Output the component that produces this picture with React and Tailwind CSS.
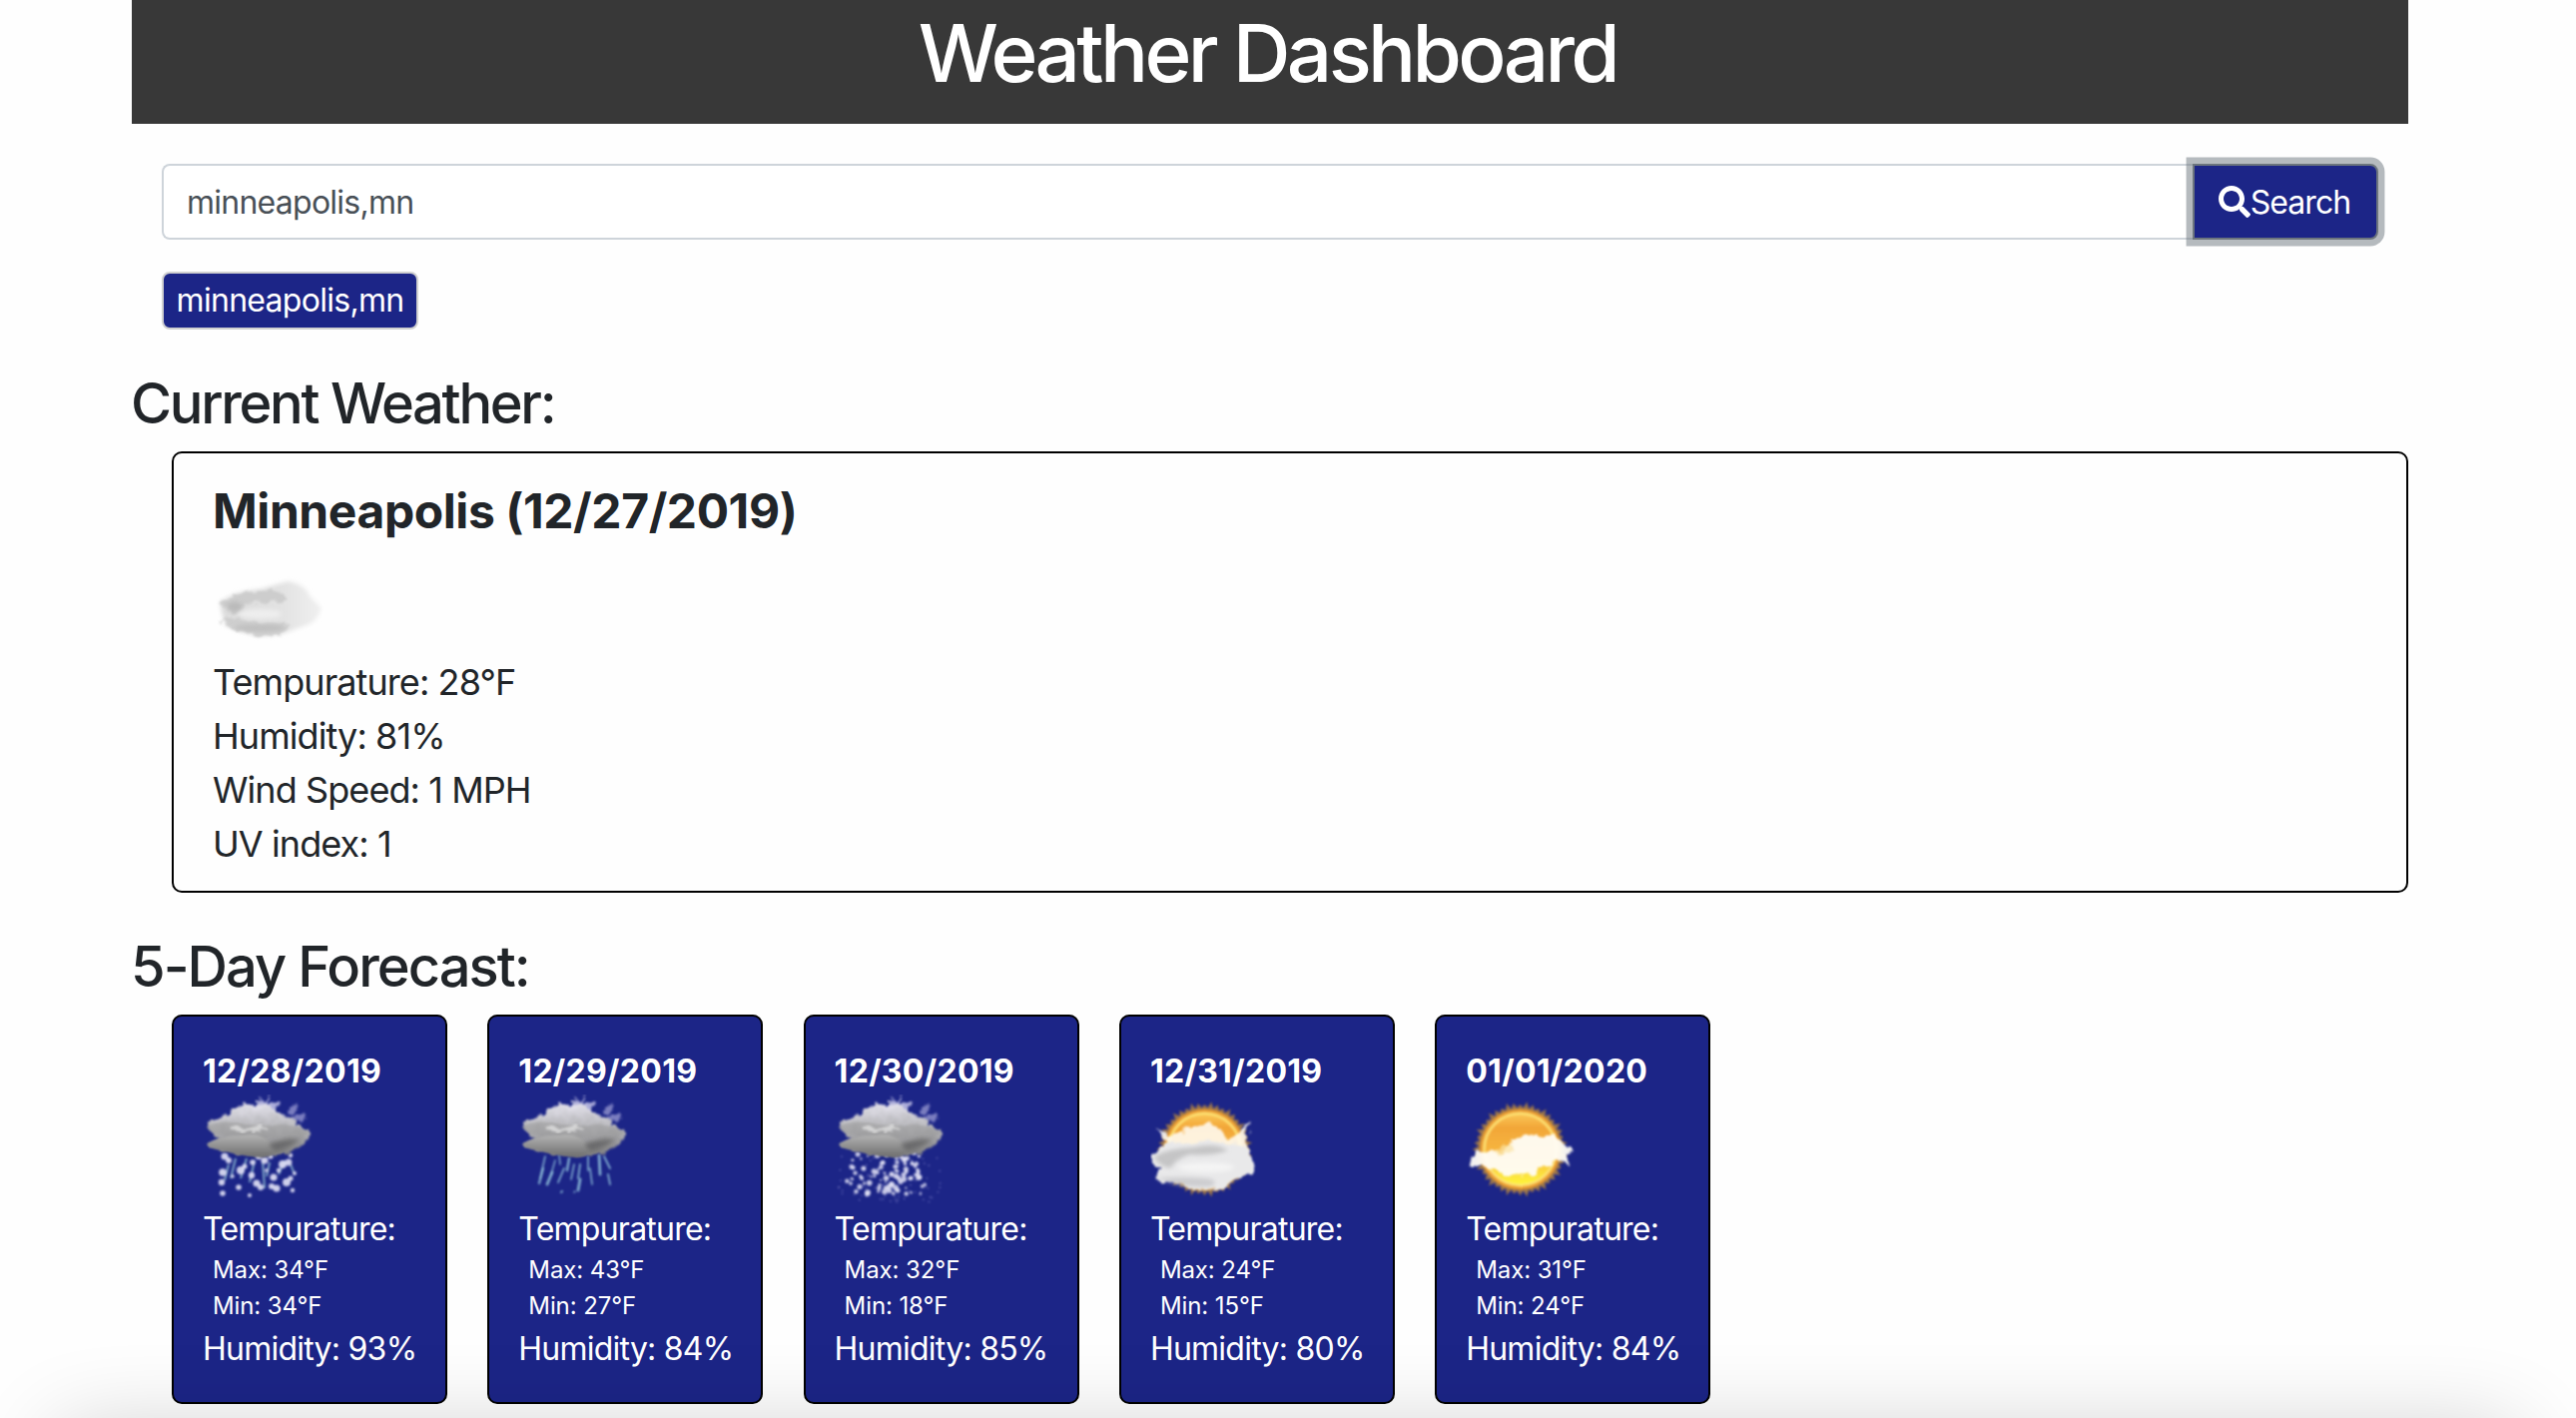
import React from "react";
import { FaSearch } from "react-icons/fa";

const forecast = [
  { date: "12/28/2019", icon: "sleet", max: 34, min: 34, humidity: 93 },
  { date: "12/29/2019", icon: "rain", max: 43, min: 27, humidity: 84 },
  { date: "12/30/2019", icon: "snow", max: 32, min: 18, humidity: 85 },
  { date: "12/31/2019", icon: "broken", max: 24, min: 15, humidity: 80 },
  { date: "01/01/2020", icon: "few", max: 31, min: 24, humidity: 84 },
];

function Defs() {
  return (
    <svg className="absolute h-0 w-0" aria-hidden="true">
      <defs>
        <filter id="wisp" x="-20%" y="-20%" width="140%" height="140%">
          <feTurbulence type="fractalNoise" baseFrequency="0.11" numOctaves="3" seed="4" result="n" />
          <feDisplacementMap in="SourceGraphic" in2="n" scale="11" xChannelSelector="R" yChannelSelector="G" />
          <feGaussianBlur stdDeviation="1.1" />
        </filter>
        <filter id="soft" x="-20%" y="-20%" width="140%" height="140%">
          <feGaussianBlur stdDeviation="0.9" />
        </filter>
        <filter id="haze" x="-30%" y="-30%" width="160%" height="160%">
          <feGaussianBlur stdDeviation="2.2" />
        </filter>
        <linearGradient id="storm" x1="0" y1="0" x2="0" y2="1">
          <stop offset="0" stopColor="#e6e4ee" />
          <stop offset="0.4" stopColor="#b9b9bd" />
          <stop offset="1" stopColor="#7c7c7e" />
        </linearGradient>
        <linearGradient id="stormLow" x1="0" y1="0" x2="0" y2="1">
          <stop offset="0" stopColor="#b4b4b4" />
          <stop offset="1" stopColor="#6e6e6e" />
        </linearGradient>
        <linearGradient id="sunFace" x1="0" y1="0" x2="0" y2="1">
          <stop offset="0" stopColor="#fbc757" />
          <stop offset="0.2" stopColor="#f2a638" />
          <stop offset="0.6" stopColor="#f7b941" />
          <stop offset="1" stopColor="#fff83a" />
        </linearGradient>
        <linearGradient id="paleCloud" x1="0" y1="0" x2="1" y2="0">
          <stop offset="0" stopColor="#dcdcdc" />
          <stop offset="0.6" stopColor="#e2e2e2" />
          <stop offset="1" stopColor="#f0f0f0" />
        </linearGradient>
      </defs>
    </svg>
  );
}

function StormCloud() {
  return (
    <g>
      <g filter="url(#wisp)">
        <path d="M52 16 L58 3 L62 9 L68 2 L67 10 L76 7 L72 18 Z" fill="#cfceee" opacity="0.8" />
        <path d="M86 18 L93 8 L95 15 L91 21 Z M86 26 L98 19 L105 21 L100 28 Z" fill="#b9b8e4" opacity="0.6" />
        <path d="M4 30 Q12 20 28 19 Q38 9 52 9 Q68 9 78 19 Q92 22 96 31 L106 36 Q106 47 98 50 Q92 58 78 59 L60 62 Q34 60 20 56 Q8 54 5 49 Q10 45 18 44 Q4 40 4 30 Z" fill="url(#storm)" />
      </g>
      <g filter="url(#soft)">
        <path d="M4 33 Q12 27 34 28 Q60 34 78 30 Q100 32 106 38 Q98 47 76 44 Q40 44 20 41 Q8 39 4 33 Z" fill="#9a9a9a" opacity="0.5" />
        <path d="M4 50 Q16 41 40 41 Q58 38 68 48 Q80 44 96 46 Q88 58 72 59 Q62 64 50 62 Q32 60 20 56 Q8 55 4 50 Z" fill="url(#stormLow)" />
      </g>
      <g filter="url(#haze)">
        <path d="M66 50 Q82 43 98 45 Q88 54 72 56 Z" fill="#5a5a5b" opacity="0.7" />
      </g>
      <g filter="url(#wisp)">
        <path d="M26 34 Q36 28 46 34 Q56 28 66 35 Q52 38 44 37 Q32 39 26 34 Z" fill="#dededf" opacity="0.8" />
      </g>
    </g>
  );
}

const sleetDots = [
  [22, 62, 3.6], [26, 66, 3], [20, 78, 3.8], [19, 88, 3.2], [20, 99, 2.8], [38, 76, 4], [42, 72, 2.6], [36, 93, 2.8], [49, 81, 3.2],
  [50, 68, 2.8], [56, 62, 3.2], [62, 66, 3.6], [68, 62, 2.6], [54, 89, 3.6], [58, 93, 3], [71, 83, 3.6], [69, 92, 3], [74, 94, 3.6],
  [80, 70, 4], [86, 68, 3.4], [84, 88, 4], [88, 84, 2.6], [90, 96, 2.2], [92, 79, 2], [47, 101, 2], [76, 76, 2.2], [88, 61, 2.2], [30, 82, 1.8], [64, 76, 1.8],
];
const sleetLines = [[33, 64, 28, 84], [44, 64, 38, 84], [52, 66, 47, 88], [60, 66, 62, 94], [67, 68, 64, 82], [82, 66, 76, 80], [88, 70, 92, 80], [26, 70, 22, 86]];
const rainLines = [
  [27, 62, 22, 84, 1.6], [25, 74, 21, 89, 2.2], [37, 66, 33, 80, 1.4], [34, 78, 29, 90, 2.8], [41, 60, 42, 70, 1.5], [46, 74, 40, 88, 1.8],
  [51, 64, 49, 76, 2.4], [56, 70, 53, 85, 1.6], [62, 70, 60, 84, 1.8], [62, 85, 60, 96, 2.8], [70, 62, 70, 76, 1.7], [72, 74, 74, 90, 1.6],
  [81, 61, 82, 80, 2.8], [86, 62, 92, 74, 1.8], [90, 80, 92, 90, 1.8], [44, 97, 43, 98, 1.8], [57, 97, 56, 98, 1.5],
];

// Deterministic scatter, so that the snowfall looks irregular but never changes.
function scatter(i, salt) {
  const v = Math.sin(i * 12.9898 + salt * 78.233) * 43758.5453;
  return v - Math.floor(v);
}
const snowDots = Array.from({ length: 96 }, (_, i) => {
  const y = 58 + scatter(i, 1) * 42;
  const edge = y > 78 ? 12 : 18;
  return [edge - 2 + scatter(i, 2) * (106 - edge * 2), y, 1 + scatter(i, 3) * 2];
});
const snowDust = Array.from({ length: 70 }, (_, i) => [4 + scatter(i, 4) * 104, 62 + scatter(i, 5) * 46, 0.8]);

function SunDisc() {
  const spikes = Array.from({ length: 88 }, (_, i) => {
    const r = i % 2 ? 40.5 : 45 + ((i * 5) % 6) * 0.8;
    const a = (i / 88) * Math.PI * 2;
    return `${54.5 + r * Math.cos(a)},${55 + r * Math.sin(a)}`;
  }).join(" ");
  return (
    <g>
      <circle cx="54.5" cy="55" r="42" fill="#c98a35" opacity="0.7" filter="url(#haze)" />
      <g filter="url(#soft)">
        <polygon points={spikes} fill="#b98a3c" opacity="0.75" />
        <circle cx="54.5" cy="55" r="40" fill="#ee9f33" />
        <circle cx="54.5" cy="55" r="36" fill="url(#sunFace)" stroke="#fde272" strokeWidth="2.4" />
      </g>
    </g>
  );
}

function WeatherIcon({ kind }) {
  return (
    <svg viewBox="0 0 112 112" className="block h-[112px] w-[112px] shrink-0" aria-hidden="true">
      {(kind === "sleet" || kind === "rain" || kind === "snow") && (
        <>
          {kind === "sleet" && (
            <g filter="url(#soft)">
              {sleetLines.map(([a, b, c, d], i) => (
                <line key={i} x1={a} y1={b} x2={c} y2={d} stroke="#7fa6c8" strokeWidth="2" />
              ))}
              {sleetDots.map(([x, y, r], i) => (
                <circle key={i} cx={x} cy={y} r={r} fill="#e2e2f6" opacity="0.9" />
              ))}
            </g>
          )}
          {kind === "rain" && (
            <g filter="url(#soft)">
              {rainLines.map(([a, b, c, d, w], i) => (
                <line key={i} x1={a} y1={b} x2={c} y2={d} stroke="#98cbe0" strokeWidth={w} strokeLinecap="round" opacity="0.8" />
              ))}
            </g>
          )}
          {kind === "snow" && (
            <g filter="url(#soft)">
              {snowDust.map(([x, y, r], i) => (
                <circle key={`d${i}`} cx={x} cy={y} r={r} fill="#9a9ad8" opacity="0.6" />
              ))}
              {snowDots.map(([x, y, r], i) => (
                <circle key={i} cx={x} cy={y} r={r} fill="#e0e0f4" opacity="0.85" />
              ))}
            </g>
          )}
          <StormCloud />
        </>
      )}
      {kind === "broken" && (
        <>
          <SunDisc />
          <g filter="url(#wisp)">
            <path d="M6 34 L16 36 L22 42 L32 38 Q36 30 50 30 Q60 26 70 34 L80 44 L92 36 L102 26 L98 38 L94 48 L102 60 L70 70 L20 52 L12 44 Z" fill="#fffcf2" opacity="0.88" />
            <path d="M10 54 Q26 46 40 48 Q58 44 76 50 Q92 50 98 56 L107 70 Q104 80 92 82 L80 90 Q62 98 46 95 L24 88 Q6 86 4 80 L10 74 Q0 68 2 62 Z" fill="#e9e9ea" />
          </g>
          <g filter="url(#haze)">
            <path d="M4 62 Q18 54 44 53 Q66 48 78 56 Q60 62 40 60 Q26 64 20 74 Q6 70 4 62 Z" fill="#b8b8ba" opacity="0.75" />
            <path d="M6 84 Q30 82 56 84 Q70 86 62 92 Q40 94 20 88 Z" fill="#c6c6c9" opacity="0.8" />
            <ellipse cx="56" cy="73" rx="28" ry="5" fill="#f4f4f4" />
          </g>
        </>
      )}
      {kind === "few" && (
        <>
          <SunDisc />
          <g filter="url(#wisp)">
            <path d="M3 70 L10 58 L28 56 L38 58 L46 44 Q54 42 60 42 Q68 37 76 42 Q88 38 96 46 Q102 50 107 58 L102 62 L106 70 L88 68 Q84 74 72 74 Q70 82 58 80 Q42 84 34 78 L18 70 L8 72 Z" fill="#fffdf6" opacity="0.95" />
            <path d="M26 60 Q34 50 46 48 L50 58 Z" fill="#fbe3a4" opacity="0.7" />
          </g>
        </>
      )}
      {kind === "overcast" && (
        <>
          <g filter="url(#haze)">
            <path d="M6 44 Q24 32 46 31 L74 23 Q92 26 96 38 L108 50 Q104 62 96 66 L74 74 Q54 80 40 77 L12 68 L8 54 Z" fill="url(#paleCloud)" />
          </g>
          <g filter="url(#wisp)">
            <path d="M6 44 Q22 35 44 33 Q68 31 74 40 Q66 46 52 45 Q40 42 32 46 L26 54 L16 54 L14 49 Z" fill="#c8c8c8" opacity="0.8" />
            <path d="M7 62 Q20 58 50 66 Q70 64 78 68 Q66 78 48 78 Q24 74 7 62 Z" fill="#cbcbcb" opacity="0.8" />
          </g>
          <g filter="url(#haze)">
            <ellipse cx="21" cy="49" rx="8" ry="5" fill="#b6b6b6" opacity="0.8" />
            <ellipse cx="46" cy="70" rx="26" ry="3.5" fill="#bcbcbc" opacity="0.8" />
            <ellipse cx="46" cy="56" rx="22" ry="5" fill="#eeeeee" />
          </g>
        </>
      )}
    </svg>
  );
}

export default function App() {
  return (
    <div className="relative h-[1420px] w-[2580px] overflow-hidden bg-[#fefefe] font-['Inter',sans-serif] text-[#212529]">
      <Defs />
      <main className="mx-auto flex w-[2280px] -translate-x-[18px] flex-col">
        <header className="flex h-[124px] justify-center bg-[#383838] pt-[5px] pr-[5px] text-white">
          <h1 className="text-[80px] leading-[96px] font-medium tracking-[-3.65px]">Weather Dashboard</h1>
        </header>

        <div className="mt-10 ml-[30px] flex h-[76px] w-[2220px]">
          <div className="flex flex-1 items-center rounded-l-lg border-2 border-r-0 border-[#ced4da] bg-white pt-0.5 pl-[23px] text-[32px] leading-[48px] tracking-[-0.75px] text-[#495057]">
            minneapolis,mn
          </div>
          <button className="flex w-[186px] items-center justify-center rounded-r-lg border-2 border-[#6c757d] bg-[#1c2587] pr-[2px] text-[32px] leading-[48px] tracking-[-0.95px] text-white shadow-[0_0_0_6.4px_rgba(108,117,125,0.5)]">
            <FaSearch className="h-8 w-8" />
            <span className="pt-0.5">Search</span>
          </button>
        </div>

        <div className="mt-8 ml-[30px] flex">
          <button className="flex h-[58px] w-[257px] items-center justify-center rounded-lg border-2 border-[#d0d0d0] bg-[#1c2587] text-[32px] tracking-[-0.72px] text-white">
            minneapolis,mn
          </button>
        </div>

        <h3 className="mt-[41px] -ml-px text-[56px] leading-[67px] font-medium tracking-[-2.3px]">Current Weather:</h3>

        <section className="mt-[14px] ml-10 h-[442px] rounded-[10px] border-2 border-black pt-[29px] pl-[39px]">
          <h4 className="text-[48px] leading-[58px] font-bold tracking-[-0.42px]">Minneapolis (12/27/2019)</h4>
          <div className="mt-[18px] ml-px h-[97px]"><WeatherIcon kind="overcast" /></div>
          <div className="flex flex-col text-[36px] leading-[54px] tracking-[-0.92px]">
            <div>Tempurature: 28°F</div>
            <div>Humidity: 81%</div>
            <div>Wind Speed: 1 MPH</div>
            <div>UV index: 1</div>
          </div>
        </section>

        <h3 className="mt-[41px] -ml-px text-[56px] leading-[67px] font-medium tracking-[-1.95px]">5-Day Forecast:</h3>

        <section className="mt-[14px] ml-10 flex gap-[40.3px]">
          {forecast.map((d) => (
            <article key={d.date} className="flex h-[390px] w-[276px] flex-col rounded-[10px] border-2 border-black bg-[#1c2587] pt-[31px] pl-[29px] text-[32px] leading-[48px] tracking-[-0.76px] text-white">
              <h5 className="font-bold tracking-[0.3px]">{d.date}</h5>
              <div className="-mt-px h-[111px]"><WeatherIcon kind={d.icon} /></div>
              <div>Tempurature:</div>
              <div className="-mt-px pl-[10px] text-[24px] leading-[36px] tracking-[-0.1px]">
                <div>Max: {d.max}°F</div>
                <div>Min: {d.min}°F</div>
              </div>
              <div className="mt-px">Humidity: {d.humidity}%</div>
            </article>
          ))}
        </section>
      </main>
      <div className="absolute top-[1434px] right-[60px] left-[60px] h-[200px] shadow-[0_0_90px_rgba(0,0,0,0.2)]" />
    </div>
  );
}
